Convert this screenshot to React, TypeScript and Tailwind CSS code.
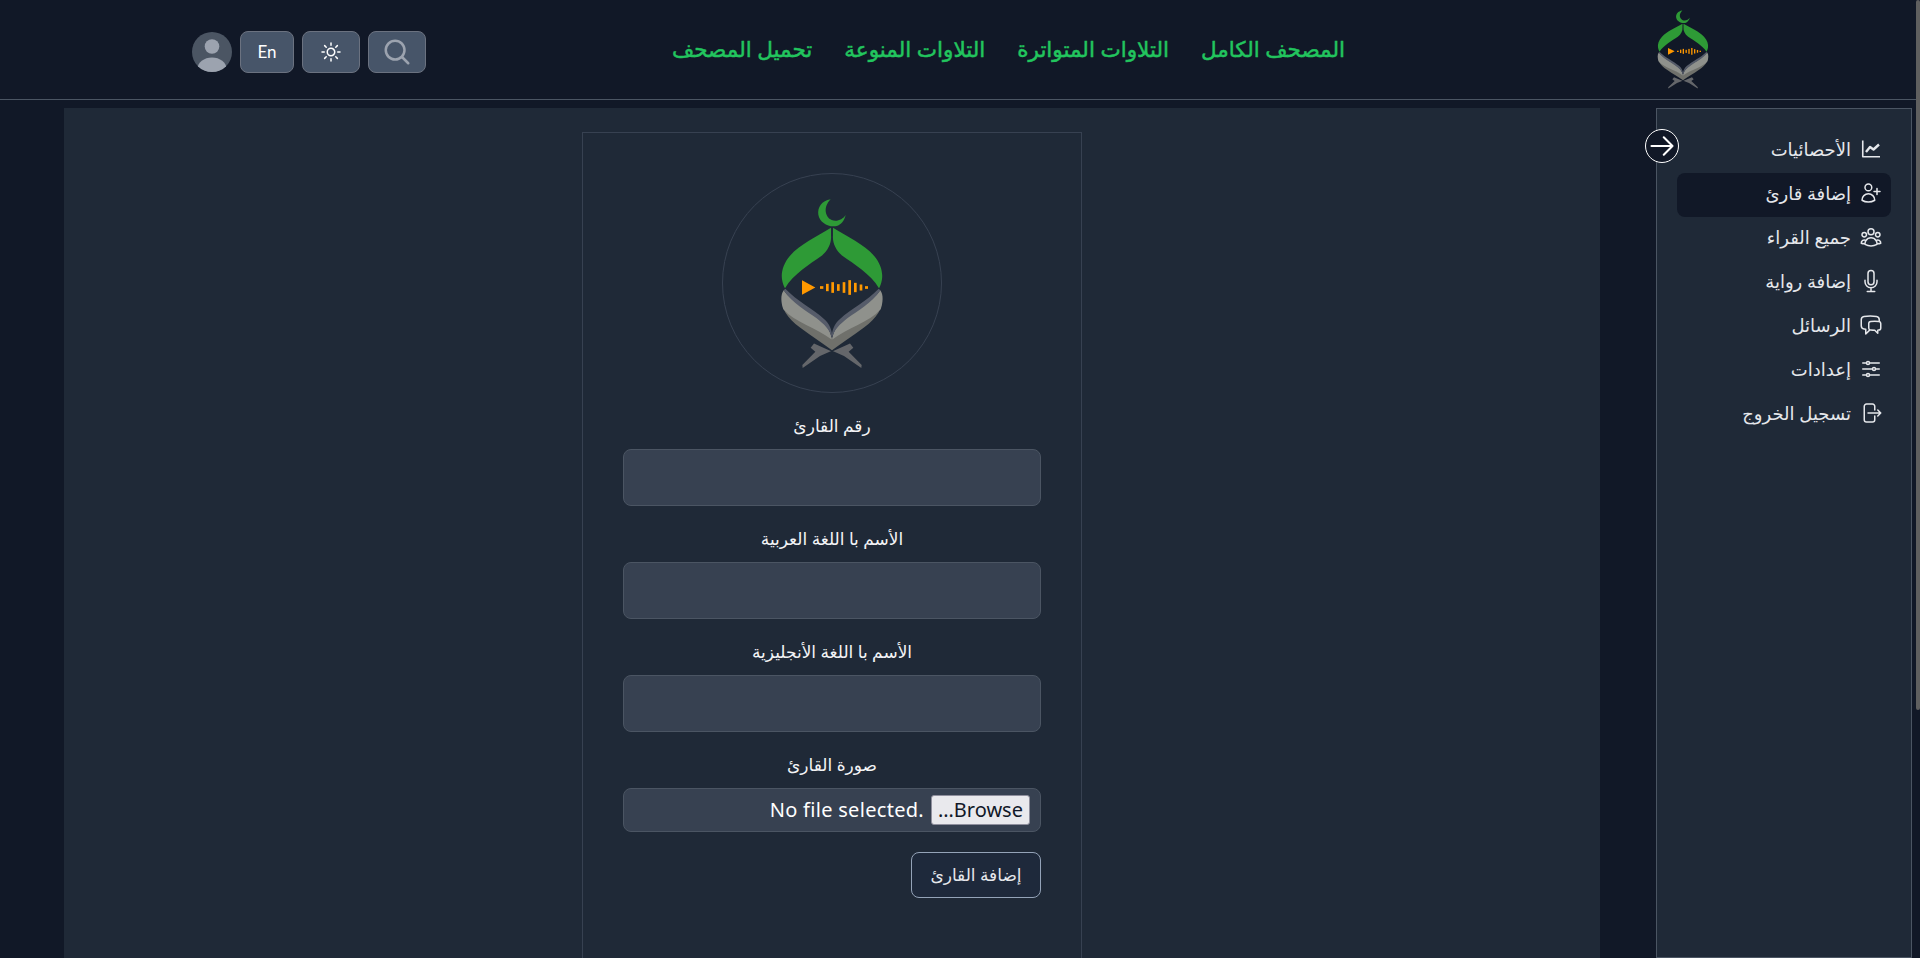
import React from "react";
import {
  HiOutlineUserPlus,
  HiOutlineUserGroup,
  HiOutlineMicrophone,
  HiOutlineChatBubbleLeftRight,
  HiOutlineAdjustmentsHorizontal,
  HiOutlineArrowRightOnRectangle,
  HiOutlineArrowRight,
  HiOutlineSun,
  HiOutlineMagnifyingGlass,
} from "react-icons/hi2";

function ChartIcon({ className }: { className?: string }) {
  return (
    <svg className={className} viewBox="-3 -3.5 24 24" fill="none" stroke="currentColor" strokeLinejoin="round">
      <path d="M0.75 0 V16.25 H18" strokeWidth="1.6" />
      <path d="M4 11.5 L8 6.5 L11.5 9 L17 4" strokeWidth="2.4" />
    </svg>
  );
}

function Logo({ className }: { className: string }) {
  const leaf =
    "M393 201 C350 228 300 250 270 285 C250 308 243 335 246 355 C248 368 252 376 255 382 C280 340 330 310 365 285 C385 268 395 245 393 225 Z";
  const half = (
    <>
      <path d="M248 410 C240 440 262 472 300 500 C335 526 368 548 396 568 L396 530 C350 500 290 480 248 410 Z" fill="#6f706b" />
      <path d="M251 388 C241 402 243 425 250 445 C285 485 350 500 395 536 C393 505 375 488 350 468 C320 445 278 425 251 388 Z" fill="#8f918c" />
      <path d="M256 384 C290 420 340 445 372 474 C388 488 398 508 396 532 C390 505 372 490 350 472 C320 450 278 428 251 388 Z" fill="#565c6a" />
      <path d="M392 570 L342 548 L332 560 L346 572 L307 612 L308 621 L360 585 L394 570 Z" fill="#64666a" />
    </>
  );
  return (
    <svg className={className} viewBox="240 112 312 512" preserveAspectRatio="none">
      <path
        d="M392 116 C365 120 352 140 355 162 C359 185 385 201 410 196 C423 192 433 180 437 163 C428 177 410 184 395 178 C376 170 368 140 392 116 Z"
        fill="#2e9a36"
      />
      <path d={leaf} fill="#2e9a36" />
      <g transform="translate(792,0) scale(-1,1)">
        <path d={leaf} fill="#2e9a36" />
      </g>
      {half}
      <g transform="translate(792,0) scale(-1,1)">{half}</g>
      <path d="M306 358 L346 380 L306 402 Z" fill="#ff9800" />
      <g fill="#ff9800">
        <rect x="360" y="376" width="10" height="8" />
        <rect x="378" y="369" width="8" height="22" />
        <rect x="394" y="364" width="8" height="32" />
        <rect x="411" y="370" width="8" height="20" />
        <rect x="428" y="364" width="8" height="32" />
        <rect x="445" y="358" width="8" height="44" />
        <rect x="462" y="366" width="8" height="28" />
        <rect x="479" y="371" width="8" height="18" />
        <rect x="495" y="376" width="9" height="8" />
      </g>
    </svg>
  );
}

const items = [
  { label: "الأحصائيات", Icon: ChartIcon },
  { label: "إضافة قارئ", Icon: HiOutlineUserPlus, active: true },
  { label: "جميع القراء", Icon: HiOutlineUserGroup },
  { label: "إضافة رواية", Icon: HiOutlineMicrophone },
  { label: "الرسائل", Icon: HiOutlineChatBubbleLeftRight },
  { label: "إعدادات", Icon: HiOutlineAdjustmentsHorizontal },
  { label: "تسجيل الخروج", Icon: HiOutlineArrowRightOnRectangle },
];

const navLinks = ["المصحف الكامل", "التلاوات المتواترة", "التلاوات المنوعة", "تحميل المصحف"];

function Field({ label }: { label: string }) {
  return (
    <div className="flex flex-col items-center mb-[19px]">
      <label className="h-6 leading-[27px] mb-[13px] text-[#f3f4f6] text-[17px]">{label}</label>
      <input
        type="text"
        className="w-[418px] h-[57px] rounded-lg bg-[#374151] border border-[#4b5563]"
      />
    </div>
  );
}

export default function App() {
  return (
    <div
      dir="rtl"
      className="relative h-screen overflow-hidden bg-[#111827] font-['Noto_Sans','DejaVu_Sans',sans-serif]"
    >
      <header className="h-[100px] border-b border-[#4b5563] flex items-center pr-[211px] pl-[192px]">
        <Logo className="w-[52px] h-[79px] shrink-0" />
        <nav className="flex gap-8 mr-[312px] text-[21.5px] font-medium text-[#22c55e] [-webkit-text-stroke:0.5px_#22c55e]">
          {navLinks.map((n) => (
            <a key={n} className="whitespace-nowrap">
              {n}
            </a>
          ))}
        </nav>
        <div className="mr-auto flex items-center gap-2 pt-1">
          <button className="w-[58px] h-[42px] rounded-lg bg-[#475569] border border-[#6b7280] flex items-center justify-center text-[#9ca3af]">
            <HiOutlineMagnifyingGlass className="w-[30px] h-[30px]" strokeWidth={2} />
          </button>
          <button className="w-[58px] h-[42px] rounded-lg bg-[#475569] border border-[#6b7280] flex items-center justify-center text-white">
            <HiOutlineSun className="w-6 h-6" />
          </button>
          <button className="w-[54px] h-[42px] rounded-lg bg-[#475569] border border-[#6b7280] flex items-center justify-center text-white font-['Lato',sans-serif] text-[17px]">
            En
          </button>
          <div className="w-10 h-10 rounded-full overflow-hidden bg-[#4b5563]">
            <svg viewBox="0 0 40 40" className="w-10 h-10">
              <circle cx="20" cy="14.5" r="7.3" fill="#9ca3af" />
              <ellipse cx="20" cy="37" rx="14.5" ry="11.5" fill="#9ca3af" />
            </svg>
          </div>
        </div>
      </header>

      <div className="flex items-start pr-2 pt-2 gap-14 h-[858px]">
        <aside className="relative w-64 h-full bg-[#1f2937] border border-[#4b5563] pt-5 px-5">
          <span className="absolute -left-[12px] top-5 w-[34px] h-[34px] rounded-full bg-[#111827] border border-white flex items-center justify-center text-white">
            <HiOutlineArrowRight className="w-7 h-7" strokeWidth={1.8} />
          </span>
          <ul>
            {items.map(({ label, Icon, active }) => (
              <li
                key={label}
                className={`h-11 flex items-center gap-2 px-2 pb-1 rounded-lg text-[#e5e7eb] text-[18px] ${active ? "bg-[#111827]" : ""}`}
              >
                <Icon className="w-6 h-6 shrink-0" />
                <span className="whitespace-nowrap">{label}</span>
              </li>
            ))}
          </ul>
        </aside>

        <main className="w-[1536px] h-full bg-[#1f2937] flex justify-center pt-6">
          <section className="w-[500px] h-[1000px] border border-[#374151] pt-10 px-10">
            <div className="w-[220px] h-[220px] mx-auto mb-[19px] rounded-full border border-[#374151] flex items-center justify-center">
              <Logo className="w-[104px] h-[171px]" />
            </div>
            <Field label="رقم القارئ" />
            <Field label="الأسم با اللغة العربية" />
            <Field label="الأسم با اللغة الأنجليزية" />
            <div className="flex flex-col items-center">
              <label className="h-6 leading-[27px] mb-[13px] text-[#f3f4f6] text-[17px]">صورة القارئ</label>
              <div className="w-[418px] h-[44px] rounded-lg bg-[#374151] border border-[#4b5563] flex items-center gap-[7px] pr-[10px] text-white text-[20px]">
                <button className="w-[99px] h-[30px] rounded-[3px] bg-[#e9e9ed] border border-[#8f8f9d] text-[#111827] text-[20px] leading-none">
                  Browse…
                </button>
                <span dir="ltr" className="tracking-[0.3px]">No file selected.</span>
              </div>
            </div>
            <div className="flex justify-start mt-5">
              <button className="w-[130px] h-[46px] rounded-lg bg-[#1e293b] border border-[#94a3b8] text-[#e5e7eb] text-[17px]">
                إضافة القارئ
              </button>
            </div>
          </section>
        </main>
      </div>

      <div className="absolute top-0 right-0 w-1 h-[710px] rounded-sm bg-[#5f5f5f]" />
    </div>
  );
}
